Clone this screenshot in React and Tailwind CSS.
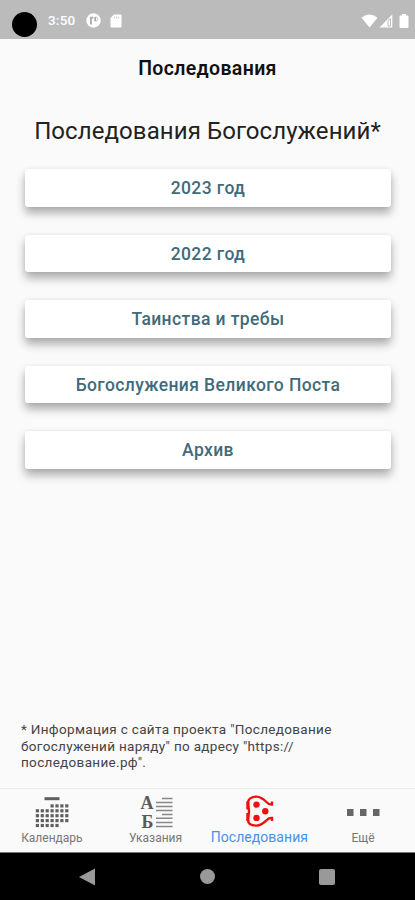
import React from 'react';

const buttons = [
    '2023 год',
    '2022 год',
    'Таинства и требы',
    'Богослужения Великого Поста',
    'Архив',
];

// first and last column of every calendar row
const calendarRows = [[3, 6], [0, 6], [0, 6], [0, 6], [0, 4]];

const StatusBar = () => (
    <div className="flex h-[39px] shrink-0 items-center bg-[#bbbbbb] pt-[2px] text-white">
        <div className="ml-3 mt-[7px] h-[25px] w-[25px] rounded-full bg-black" />
        <span className="ml-[11px] text-[13.5px] font-medium tracking-[0.2px]">3:50</span>
        <svg className="ml-[11px]" width="15" height="15" viewBox="0 0 15 15">
            <circle cx="7.5" cy="7.5" r="7.2" fill="#fff" />
            <path d="M5 3.800v7.700M5 4.600h2.300M9.200 4v4.300" fill="none" stroke="#aaa" strokeWidth="1.800" />
            <path d="M9.500 3.800a2.300 2.300 0 0 1 0 4.600" fill="none" stroke="#ccc" strokeWidth="1" />
        </svg>
        <svg className="ml-[9px]" width="12" height="14" viewBox="0 0 12 14">
            <path d="M4 .5h6.500q1 0 1 1v11q0 1-1 1h-9q-1 0-1-1V4z" fill="#fff" />
            <path d="M4.300 2.500v2M6.500 2.500v2M8.700 2.500v2" stroke="#ccc" strokeWidth="1" />
        </svg>
        <svg className="ml-auto" width="17" height="14" viewBox="0 0 17 14">
            <path d="M8.500 13.500.5 3.800Q8.500-2.600 16.500 3.800z" fill="#fff" />
        </svg>
        <svg className="ml-px" width="14" height="14" viewBox="0 0 14 14">
            <path d="M13.300.5v13H.5z" fill="#fff" />
            <path d="M9 6.500v5.500h2.500V4.500z" fill="none" stroke="#bbb" strokeWidth="1" />
        </svg>
        <svg className="ml-[6px] mr-[6px]" width="10" height="14" viewBox="0 0 10 14">
            <path d="M3 0h4v1.500h1.500q1 0 1 1V13q0 1-1 1h-7q-1 0-1-1V2.500q0-1 1-1H3z" fill="#fff" />
        </svg>
    </div>
);

const CalendarIcon = () => (
    <svg width="34" height="34" viewBox="0 0 34 34" fill="#5f5f5f">
        <rect x="9.500" y="3.200" width="15" height="3" />
        {calendarRows.map(([from, to], row) =>
            Array.from({ length: to - from + 1 }, (_, i) => (
                <rect key={`${row}-${i}`} x={0.8 + (from + i) * 4.9} y={10.3 + row * 4.9} width="3.2" height="3.2" />
            ))
        )}
    </svg>
);

const DirectionsIcon = () => (
    <svg className="overflow-visible" width="34" height="34" viewBox="0 0 34 34" fill="#5a5a5a">
        <text x="1.500" y="15" fontSize="18" fontWeight="bold" fontFamily="Liberation Serif, serif">А</text>
        <text x="2.500" y="34" fontSize="18" fontWeight="bold" fontFamily="Liberation Serif, serif">Б</text>
        <path d="M23 4.500h10.500M17 8.500h16.500M17 12.500h16.500M17 16.500h16.500M23 20.500h10.500M17 24.200h16.500M17 28.500h16.500M17 32.500h16.500" stroke="#888" strokeWidth="1.500" />
    </svg>
);

const ServicesIcon = () => (
    <svg width="30" height="34" viewBox="0 0 30 34" fill="#f50d0d">
        <path
            d="M28 7.500v3c-2 .3-3.500-.3-5-2C20 5.500 17 2.600 12.500 2.600c-4.500 0-8.500 2-8.500 6.400 0 3.500 1 5 1 8.200s-1 4.700-1 8.200c0 4.400 4 6.200 8.500 6.200 4.500 0 7.500-2.700 10.500-5.700 1.500-1.700 3-2.300 5-2v3"
            fill="none"
            stroke="#f50d0d"
            strokeWidth="2.400"
        />
        <path d="M3.800 7.500v8M3.800 19v8" stroke="#f50d0d" strokeWidth="3" />
        <circle cx="12.500" cy="10.600" r="3.200" />
        <circle cx="21.300" cy="17.200" r="3.200" />
        <circle cx="12.500" cy="23.900" r="3.200" />
    </svg>
);

const MoreIcon = () => (
    <svg width="34" height="34" viewBox="0 0 34 34" fill="#666">
        <rect x="1" y="15" width="6.500" height="7" />
        <rect x="14" y="15" width="6.500" height="7" />
        <rect x="27" y="15" width="6.500" height="7" />
    </svg>
);

const Tab = ({ icon, label, active }) => (
    <div className="flex flex-col items-center pt-[5px]">
        {icon}
        <span
            className={
                active
                    ? 'mt-px whitespace-nowrap text-[14px] leading-4 tracking-[0.05px] text-[#4a90e8]'
                    : 'mt-[2px] whitespace-nowrap text-[12px] leading-4 text-[#777]'
            }
        >
            {label}
        </span>
    </div>
);

const App = () => {
    return (
        <div className="flex h-[900px] w-[415px] flex-col overflow-hidden bg-[#fafafa] font-['Roboto',sans-serif]">
            <StatusBar />
            <h1 className="mt-[17px] text-center text-[19.5px] font-semibold leading-[26px] tracking-[0.35px] text-[#111]">Последования</h1>
            <h2 className="mt-[34px] whitespace-nowrap text-center text-[24px] font-normal leading-[30px] tracking-[0.08px] text-[#222]">
                Последования Богослужений*
            </h2>

            <div className="ml-[25px] mt-[23px] flex w-[366px] flex-col gap-[28px]">
                {buttons.map((label) => (
                    <button
                        key={label}
                        className="h-[37.5px] rounded-[3px] bg-white pt-px text-[17.5px] font-medium tracking-[0.4px] text-[#3f6b7c] shadow-[0_6px_10px_rgba(0,0,0,0.32),0_0_4px_rgba(0,0,0,0.06)]"
                    >
                        {label}
                    </button>
                ))}
            </div>

            <p className="mb-[18px] ml-[21px] mt-auto text-[13.5px] leading-[16.2px] tracking-[0.32px] text-[#444]">
                * Информация с сайта проекта "Последование
                <br />
                богослужений наряду" по адресу "https://
                <br />
                последование.рф".
            </p>

            <nav className="grid h-[64px] shrink-0 grid-cols-4 border-t border-[#ededed]">
                <Tab icon={<CalendarIcon />} label="Календарь" />
                <Tab icon={<DirectionsIcon />} label="Указания" />
                <Tab icon={<ServicesIcon />} label="Последования" active />
                <Tab icon={<MoreIcon />} label="Ещё" />
            </nav>

            <div className="flex h-[48px] shrink-0 items-center border-t border-[#777] bg-black">
                <svg className="ml-[79px]" width="17" height="18" viewBox="0 0 17 18">
                    <path d="M0 9 16 .5v17z" fill="#999" />
                </svg>
                <div className="ml-[104px] h-[15px] w-[15px] rounded-full bg-[#999]" />
                <div className="ml-[104px] h-4 w-4 rounded-[2px] bg-[#999]" />
            </div>
        </div>
    );
};

export default App;
